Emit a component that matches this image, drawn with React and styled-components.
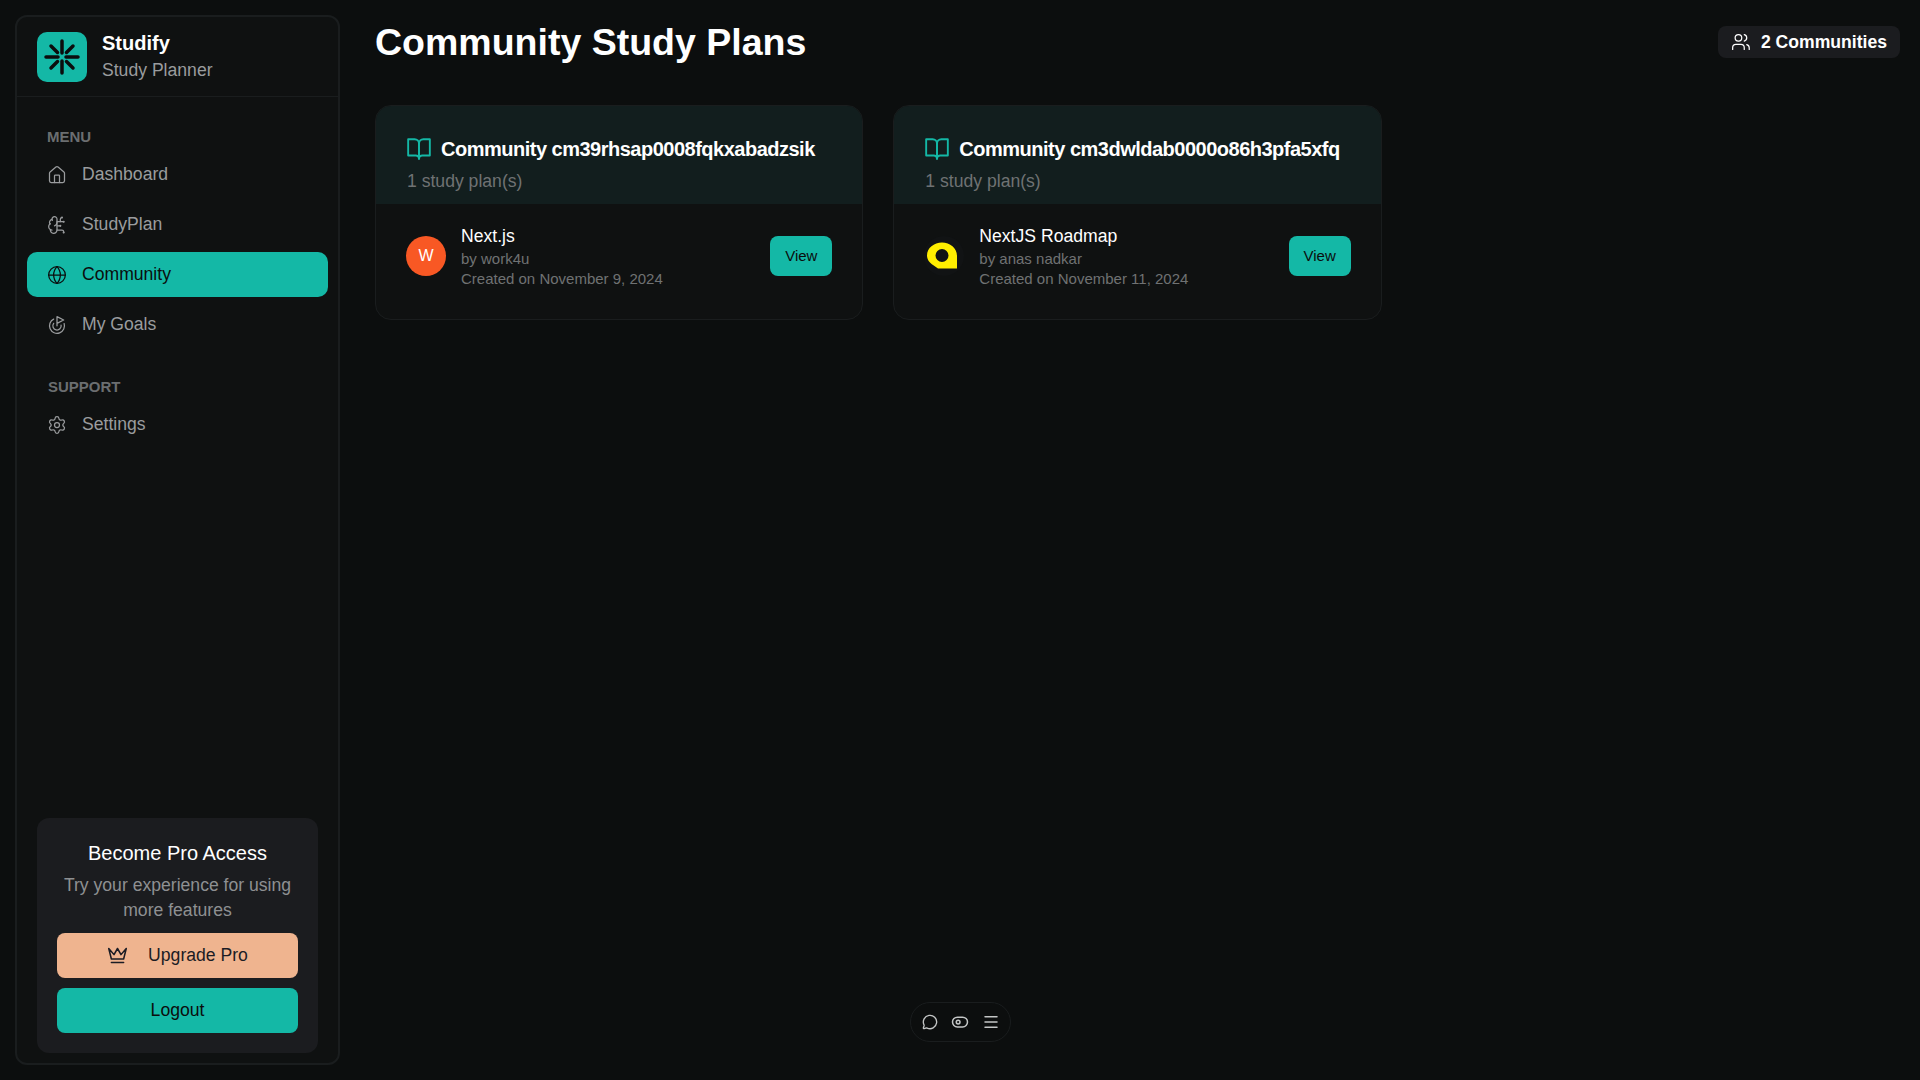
import React from "react";
import styled, { createGlobalStyle } from "styled-components";
import {
  House,
  BrainCircuit,
  Globe,
  Goal,
  Settings,
  Users,
  MessageCircle,
  Menu,
} from "lucide-react";

const GlobalStyle = createGlobalStyle`
  * { box-sizing: border-box; }
  html, body { margin: 0; height: 100%; }
  body {
    background: #0c0e0e;
    font-family: "Liberation Sans", Arial, sans-serif;
    color: #fff;
  }
`;

const menuItems = [
  { label: "Dashboard", icon: House },
  { label: "StudyPlan", icon: BrainCircuit },
  { label: "Community", icon: Globe, active: true },
  { label: "My Goals", icon: Goal },
];

const communities = [
  {
    id: "cm39rhsap0008fqkxabadzsik",
    plan: "Next.js",
    author: "work4u",
    created: "November 9, 2024",
    avatar: "letter",
  },
  {
    id: "cm3dwldab0000o86h3pfa5xfq",
    plan: "NextJS Roadmap",
    author: "anas nadkar",
    created: "November 11, 2024",
    avatar: "logo",
  },
];

const BrandIcon = () => (
  <svg width="50" height="50" viewBox="0 0 50 50" fill="none" stroke="currentColor" strokeWidth="3.5" strokeLinecap="round">
    <path d="M25 9v12M25 29v12M9 25h12M29 25h12M14 14l6.500 6.500M36 14l-6.500 6.500M14 36l6.500-6.500M36 36l-6.500-6.500" />
  </svg>
);

const CrownIcon = () => (
  <svg width="21" height="21" viewBox="0 0 24 24" fill="none" stroke="currentColor" strokeWidth="1.75" strokeLinecap="round" strokeLinejoin="round">
    <path d="m2 4 3 12h14l3-12-6 7-4-7-4 7-6-7Z" />
    <path d="M5 20h14" />
  </svg>
);

const BookIcon = () => (
  <BookSvg width="26" height="26" viewBox="0 0 24 24" fill="none" stroke="#14b8a6" strokeWidth="1.75" strokeLinecap="round" strokeLinejoin="round">
    <path d="M2 3h6a4 4 0 0 1 4 4v14a3 3 0 0 0-3-3H2z" />
    <path d="M22 3h-6a4 4 0 0 0-4 4v14a3 3 0 0 1 3-3h7z" />
  </BookSvg>
);

const ToggleIcon = () => (
  <svg width="18" height="18" viewBox="0 0 24 24" fill="none" stroke="currentColor" strokeWidth="2">
    <rect x="2" y="5.5" width="20" height="13" rx="6.5" />
    <circle cx="9.5" cy="12" r="2.5" />
  </svg>
);

const YellowLogo = () => (
  <svg width="40" height="40" viewBox="0 0 40 40">
    <path
      fill="#ffee00"
      fillRule="evenodd"
      d="M18 6.500C10 6.500 3 12 3 19.500c0 4.500 3 7.500 6 9.500l5 3.500h19V20c0-8-7-13.500-15-13.500ZM18 13a6.500 6.500 0 1 1 0 13 6.500 6.500 0 0 1 0-13Z"
    />
  </svg>
);

export default function App() {
  return (
    <>
      <GlobalStyle />
      <Page>
        <Sidebar>
          <Brand>
            <BrandMark>
              <BrandIcon />
            </BrandMark>
            <div>
              <BrandName>Studify</BrandName>
              <BrandSub>Study Planner</BrandSub>
            </div>
          </Brand>
          <Nav>
            <NavLabel>MENU</NavLabel>
            {menuItems.map(({ label, icon: Icon, active }) => (
              <NavItem key={label} $active={active}>
                <Icon size={20} strokeWidth={1.5} />
                {label}
              </NavItem>
            ))}
            <NavLabel $support>SUPPORT</NavLabel>
            <NavItem>
              <Settings size={20} strokeWidth={1.5} />
              Settings
            </NavItem>
          </Nav>
          <ProCard>
            <ProTitle>Become Pro Access</ProTitle>
            <ProText>Try your experience for using more features</ProText>
            <UpgradeButton>
              <CrownIcon />
              Upgrade Pro
            </UpgradeButton>
            <LogoutButton>Logout</LogoutButton>
          </ProCard>
        </Sidebar>
        <Main>
          <TopRow>
            <Title>Community Study Plans</Title>
            <CountBadge>
              <Users size={20} strokeWidth={1.5} />
              2 Communities
            </CountBadge>
          </TopRow>
          <CardGrid>
            {communities.map((c) => (
              <Card key={c.id}>
                <CardHead>
                  <CardTitle>
                    <BookIcon />
                    Community {c.id}
                  </CardTitle>
                  <CardCount>1 study plan(s)</CardCount>
                </CardHead>
                <CardBody>
                  <Avatar $letter={c.avatar === "letter"}>
                    {c.avatar === "letter" ? "W" : <YellowLogo />}
                  </Avatar>
                  <PlanInfo>
                    <PlanName>{c.plan}</PlanName>
                    <PlanMeta>by {c.author}</PlanMeta>
                    <PlanMeta>Created on {c.created}</PlanMeta>
                  </PlanInfo>
                  <ViewButton>View</ViewButton>
                </CardBody>
              </Card>
            ))}
          </CardGrid>
        </Main>
        <FloatBar>
          <MessageCircle size={16} strokeWidth={2} />
          <ToggleIcon />
          <Menu size={18} strokeWidth={2} />
        </FloatBar>
      </Page>
    </>
  );
}

const Page = styled.div`
  display: flex;
  height: 1080px;
  padding: 15px 20px 15px 15px;
  gap: 35px;
  overflow: hidden;
`;
const Sidebar = styled.aside`
  width: 325px;
  flex-shrink: 0;
  display: flex;
  flex-direction: column;
  background: #0f1111;
  border: 2px solid #1a1d1e;
  border-radius: 12px;
`;
const Brand = styled.div`
  display: flex;
  align-items: center;
  gap: 15px;
  height: 80px;
  padding: 0 20px;
  border-bottom: 1px solid #1a1d1e;
`;
const BrandMark = styled.div`
  width: 50px;
  height: 50px;
  display: flex;
  align-items: center;
  justify-content: center;
  background: #14b8a6;
  border-radius: 10px;
  color: #0b0d0d;
`;
const BrandName = styled.div`
  font-size: 20px;
  font-weight: 700;
  line-height: 27px;
  padding-top: 1px;
`;
const BrandSub = styled.div`
  font-size: 17.6px;
  line-height: 27px;
  color: #9a9c9e;
`;
const Nav = styled.nav`
  flex: 1;
  display: flex;
  flex-direction: column;
  gap: 5px;
  padding: 30px 10px 0;
`;
const NavLabel = styled.div`
  font-size: 15px;
  font-weight: 700;
  color: #6b6e70;
  padding-left: ${(p) => (p.$support ? "21px" : "20px")};
  line-height: 20px;
  margin-top: ${(p) => (p.$support ? "25px" : "0")};
`;
const NavItem = styled.a`
  height: 45px;
  display: flex;
  align-items: center;
  gap: 15px;
  padding: 0 20px;
  font-size: 17.6px;
  border-radius: 10px;
  color: ${(p) => (p.$active ? "#0b0d0d" : "#9a9c9e")};
  background: ${(p) => (p.$active ? "#14b8a6" : "transparent")};
`;
const ProCard = styled.div`
  margin: 0 20px 10px;
  padding: 21px 20px 20px;
  background: #1b1c1f;
  border-radius: 12px;
  text-align: center;
`;
const ProTitle = styled.div`
  font-size: 20px;
  line-height: 28px;
`;
const ProText = styled.p`
  margin: 6px 0 10px;
  font-size: 17.6px;
  line-height: 25px;
  color: #8e9092;
`;
const UpgradeButton = styled.button`
  width: 100%;
  height: 45px;
  display: flex;
  align-items: center;
  justify-content: center;
  gap: 20px;
  border: none;
  border-radius: 8px;
  background: #efb48f;
  color: #1b1c24;
  font: 17.6px "Liberation Sans", Arial, sans-serif;
`;
const LogoutButton = styled.button`
  width: 100%;
  height: 45px;
  margin-top: 10px;
  border: none;
  border-radius: 8px;
  background: #14b8a6;
  color: #0b0d0d;
  font: 17.6px "Liberation Sans", Arial, sans-serif;
`;
const Main = styled.main`
  flex: 1;
  min-width: 0;
`;
const TopRow = styled.div`
  display: flex;
  align-items: center;
  justify-content: space-between;
  height: 54px;
  margin-bottom: 36px;
`;
const Title = styled.h1`
  margin: 0;
  font-size: 37.5px;
  font-weight: 700;
`;
const CountBadge = styled.div`
  display: flex;
  align-items: center;
  gap: 10px;
  width: 182px;
  height: 32px;
  padding: 0 13px;
  background: #1b1c1f;
  border-radius: 8px;
  font-size: 17.6px;
  font-weight: 700;
  white-space: nowrap;
`;
const CardGrid = styled.div`
  display: grid;
  grid-template-columns: repeat(3, 1fr);
  gap: 30px;
`;
const Card = styled.section`
  border: 1px solid #1a1d1e;
  border-radius: 16px;
  background: #0f1111;
  overflow: hidden;
`;
const CardHead = styled.div`
  height: 98px;
  padding: 31px 31px 0;
  background: #121e1e;
`;
const CardTitle = styled.h2`
  display: flex;
  align-items: center;
  gap: 10px;
  margin: 0;
  font-size: 20px;
  font-weight: 700;
  line-height: 24px;
  letter-spacing: -0.5px;
  white-space: nowrap;
`;
const BookSvg = styled.svg`
  margin: -1px;
  flex-shrink: 0;
`;
const CardCount = styled.div`
  margin-top: 8px;
  font-size: 17.6px;
  line-height: 24px;
  color: #6f7273;
`;
const CardBody = styled.div`
  display: flex;
  align-items: center;
  gap: 15px;
  height: 115px;
  padding: 0 30px 12px;
`;
const Avatar = styled.div`
  width: 40px;
  height: 40px;
  flex-shrink: 0;
  display: flex;
  align-items: center;
  justify-content: center;
  border-radius: 50%;
  font-size: 16px;
  background: ${(p) => (p.$letter ? "#f85824" : "#111314")};
`;
const PlanInfo = styled.div`
  flex: 1;
  padding-top: 2px;
`;
const PlanName = styled.div`
  font-size: 17.6px;
  line-height: 24px;
  margin-bottom: 1px;
`;
const PlanMeta = styled.div`
  font-size: 15px;
  line-height: 20px;
  color: #6f7273;
`;
const ViewButton = styled.button`
  width: 62px;
  height: 40px;
  border: none;
  border-radius: 8px;
  background: #14b8a6;
  color: #0b0d0d;
  font: 15px "Liberation Sans", Arial, sans-serif;
`;
const FloatBar = styled.div`
  position: fixed;
  left: 910px;
  top: 1002px;
  width: 101px;
  height: 40px;
  display: flex;
  align-items: center;
  justify-content: center;
  gap: 13px;
  border: 1px solid #1a1d1e;
  border-radius: 20px;
  color: #c4c6c6;
`;
